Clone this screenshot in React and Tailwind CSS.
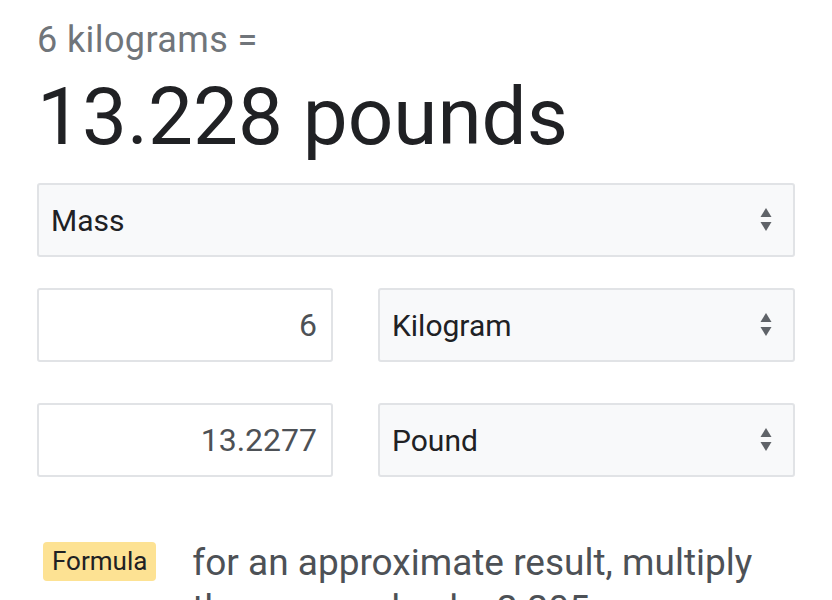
import React from 'react'

function Arrows() {
    return (
        <svg width="12" height="24" viewBox="0 0 12 24" className="shrink-0">
            <path d="M6 0 L11.5 9 L0.5 9 Z" fill="#5f6368" />
            <path d="M0.5 14 L11.5 14 L6 23 Z" fill="#5f6368" />
        </svg>
    )
}

function SelectBox({ label }) {
    return (
        <div className="flex-1 h-[74px] flex items-center justify-between pl-[12px] pr-[21px] bg-[#f8f9fa] border-2 border-[#e1e3e6] rounded-[3px]">
            <span className="text-[30px] text-[#202124]">{label}</span>
            <Arrows />
        </div>
    )
}

function NumberBox({ value }) {
    return (
        <div className="w-[296px] h-[74px] flex items-center justify-end pr-[14px] bg-white border-2 border-[#e1e3e6] rounded-[3px]">
            <span className="text-[32px] text-[#4d5156]">{value}</span>
        </div>
    )
}

export default function App() {
    return (
        <div className="w-[832px] h-[600px] overflow-hidden bg-white px-[37px] pt-[20px] font-['Roboto',sans-serif]">
            {/* result header */}
            <p className="text-[36px] leading-[41px] text-[#70757a] tracking-[0.4px]">6 kilograms =</p>
            <h1 className="mt-[16px] text-[80px] leading-[80px] text-[#202124]">13.228 pounds</h1>

            {/* unit type */}
            <div className="mt-[26px] flex">
                <SelectBox label="Mass" />
            </div>

            {/* from / to */}
            <div className="mt-[31px] flex gap-[45px]">
                <NumberBox value="6" />
                <SelectBox label="Kilogram" />
            </div>
            <div className="mt-[41px] flex gap-[45px]">
                <NumberBox value="13.2277" />
                <SelectBox label="Pound" />
            </div>

            {/* formula */}
            <div className="mt-[65px] flex items-start gap-[36px]">
                <span className="ml-[6px] h-[39px] px-[9px] flex items-center rounded-[4px] bg-[#fde293] text-[26px] text-[#202124]">Formula</span>
                <p className="-mt-[2px] w-[590px] text-[37px] leading-[46px] text-[#4d5156]">for an approximate result, multiply the mass value by 2.205</p>
            </div>
        </div>
    )
}
